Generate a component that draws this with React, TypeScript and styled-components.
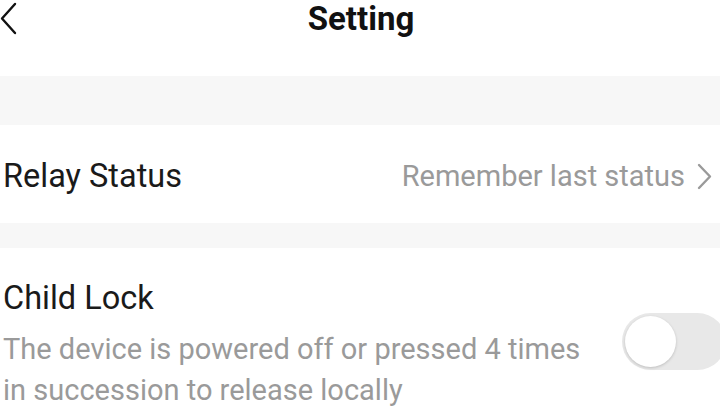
import styled, { createGlobalStyle } from "styled-components";

const GlobalStyle = createGlobalStyle`
  html, body {
    margin: 0;
    padding: 0;
    background: #ffffff;
    font-family: Roboto, "Noto Sans", sans-serif;
    overflow: hidden;
  }
`;

const Page = styled.div`
  width: 720px;
  height: 407px;
  overflow: hidden;
  background: #ffffff;
  display: flex;
  flex-direction: column;

  & > * {
    flex-shrink: 0;
  }
`;

const Header = styled.header`
  height: 76px;
  position: relative;
  display: flex;
  justify-content: center;
  align-items: flex-start;
`;

const BackButton = styled.button`
  position: absolute;
  left: 0;
  top: 2px;
  border: none;
  background: none;
  padding: 0;
  width: 20px;
  height: 36px;
  display: flex;
`;

const Title = styled.h1`
  margin: 0;
  padding-left: 2px;
  font-size: 33px;
  font-weight: 700;
  color: #111111;
  line-height: 38px;
`;

const Divider = styled.div<{ $height: number }>`
  height: ${(p) => p.$height}px;
  background: #f7f7f7;
`;

const Row = styled.div`
  height: 98px;
  box-sizing: border-box;
  padding: 4px 8px 0 3px;
  display: flex;
  align-items: center;
  justify-content: space-between;
`;

const Label = styled.span`
  font-size: 32.5px;
  color: #1a1a1a;
  line-height: 38px;
`;

const Value = styled.span`
  display: flex;
  align-items: center;
  gap: 12px;
  font-size: 29px;
  color: #9a9a9a;
`;

const LockSection = styled.div`
  padding: 31px 0 0 3px;
  display: flex;
  align-items: flex-start;
  justify-content: space-between;
`;

const LockText = styled.div`
  display: flex;
  flex-direction: column;
`;

const Description = styled.p`
  margin: 12px 0 0;
  font-size: 29px;
  line-height: 41px;
  color: #9a9a9a;
  width: 600px;
`;

const Toggle = styled.div`
  margin-top: 34px;
  width: 104px;
  height: 57px;
  border-radius: 29px;
  background: #e8e8e8;
  flex-shrink: 0;
  margin-right: -6px;
  display: flex;
  align-items: center;
  padding-left: 3px;
  box-sizing: border-box;
`;

const Knob = styled.div`
  width: 51px;
  height: 51px;
  border-radius: 50%;
  background: #ffffff;
  box-shadow: 0 1px 3px rgba(0, 0, 0, 0.18);
`;

function Chevron({ dir, color, w, h }: { dir: "left" | "right"; color: string; w: number; h: number }) {
  const d = dir === "left" ? `M${w - 2} 2 L2 ${h / 2} L${w - 2} ${h - 2}` : `M2 2 L${w - 2} ${h / 2} L2 ${h - 2}`;
  return (
    <svg width={w} height={h} viewBox={`0 0 ${w} ${h}`}>
      <path d={d} fill="none" stroke={color} strokeWidth={2.4} strokeLinecap="round" strokeLinejoin="round" />
    </svg>
  );
}

export default function App() {
  return (
    <Page>
      <GlobalStyle />
      <Header>
        <BackButton aria-label="back">
          <Chevron dir="left" color="#111" w={17} h={33} />
        </BackButton>
        <Title>Setting</Title>
      </Header>
      <Divider $height={49} />
      <Row>
        <Label>Relay Status</Label>
        <Value>
          Remember last status
          <Chevron dir="right" color="#9a9a9a" w={15} h={27} />
        </Value>
      </Row>
      <Divider $height={25} />
      <LockSection>
        <LockText>
          <Label>Child Lock</Label>
          <Description>
            The device is powered off or pressed 4 times in succession to release locally
          </Description>
        </LockText>
        <Toggle>
          <Knob />
        </Toggle>
      </LockSection>
    </Page>
  );
}
